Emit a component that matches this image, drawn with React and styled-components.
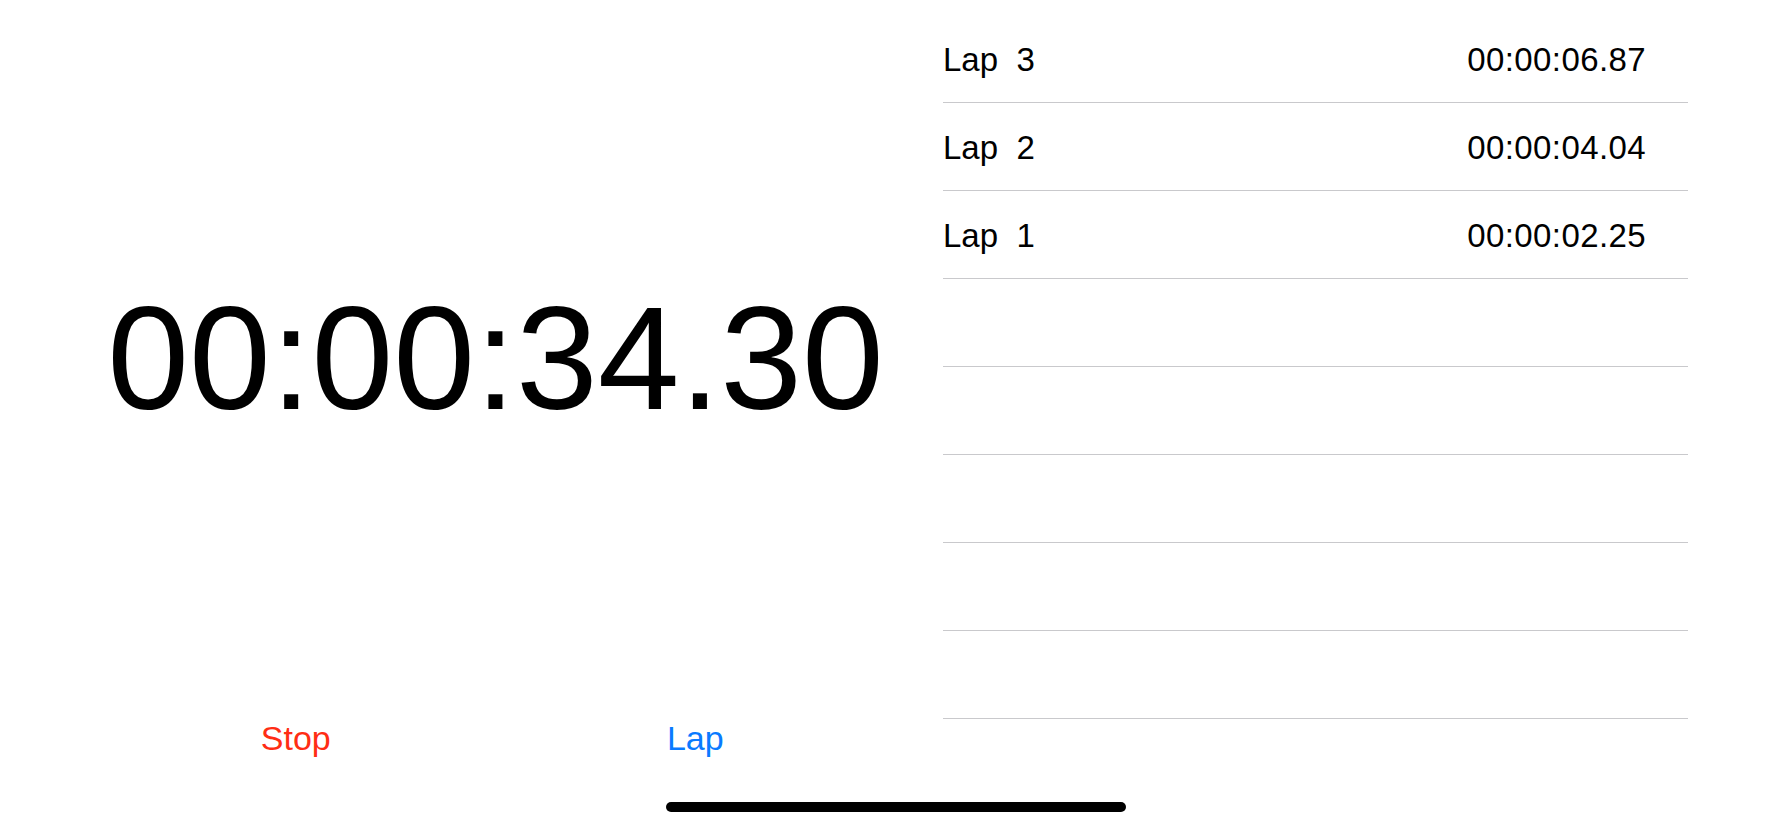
import React from "react";
import styled, { createGlobalStyle } from "styled-components";

const Global = createGlobalStyle`
  html, body { margin: 0; padding: 0; background: #ffffff; }
  body { font-family: "Liberation Sans", Arial, Helvetica, sans-serif; color: #000; }
`;

const Screen = styled.div`
  position: relative;
  display: flex;
  width: 1792px;
  height: 828px;
  padding: 0 104px 0 96px;
  box-sizing: border-box;
  overflow: hidden;
  background: #fff;
`;

const LeftPane = styled.div`
  width: 799px;
  display: flex;
  flex-direction: column;
  align-items: stretch;
  padding-top: 284px;
  box-sizing: border-box;
`;

const TimerText = styled.div`
  font-size: 147px;
  line-height: 148px;
  height: 148px;
  text-align: center;
  letter-spacing: 0;
  white-space: nowrap;
`;

const ButtonRow = styled.div`
  display: grid;
  grid-template-columns: 1fr 1fr;
  margin-top: 289px;
`;

const ActionButton = styled.button`
  appearance: none;
  border: 0;
  background: none;
  padding: 0;
  margin: 0;
  font-family: "Liberation Sans", Arial, sans-serif;
  font-size: 34px;
  line-height: 34px;
  color: ${(p) => p.$color};
  text-align: center;
  cursor: pointer;
`;

const LapsPane = styled.div`
  margin-left: 48px;
  flex: 1;
  padding-top: 15px;
  display: flex;
  flex-direction: column;
`;

const LapRow = styled.div`
  display: flex;
  align-items: center;
  justify-content: space-between;
  height: 88px;
  padding: 2px 42px 0 0;
  box-sizing: border-box;
  border-bottom: 1px solid #c9c9cc;
  font-size: 33px;
  line-height: 33px;
`;

const LapLabel = styled.span`
  white-space: pre;
`;

const LapTime = styled.span`
  white-space: nowrap;
  letter-spacing: 0.4px;
`;

const HomeIndicator = styled.div`
  position: absolute;
  left: 666px;
  top: 802px;
  width: 460px;
  height: 10px;
  border-radius: 5px;
  background: #000;
`;

const laps = [
  { n: 3, t: "00:00:06.87" },
  { n: 2, t: "00:00:04.04" },
  { n: 1, t: "00:00:02.25" },
];

export default function App() {
  const rows = [...laps, ...Array(5).fill(null)];
  return (
    <>
      <Global />
      <Screen>
        <LeftPane>
          <TimerText>00:00:34.30</TimerText>
          <ButtonRow>
            <ActionButton $color="#ff2d14">Stop</ActionButton>
            <ActionButton $color="#0a7aff">Lap</ActionButton>
          </ButtonRow>
        </LeftPane>
        <LapsPane>
          {rows.map((r, i) => (
            <LapRow key={i}>
              {r && (
                <>
                  <LapLabel>{`Lap  ${r.n}`}</LapLabel>
                  <LapTime>{r.t}</LapTime>
                </>
              )}
            </LapRow>
          ))}
        </LapsPane>
        <HomeIndicator />
      </Screen>
    </>
  );
}
